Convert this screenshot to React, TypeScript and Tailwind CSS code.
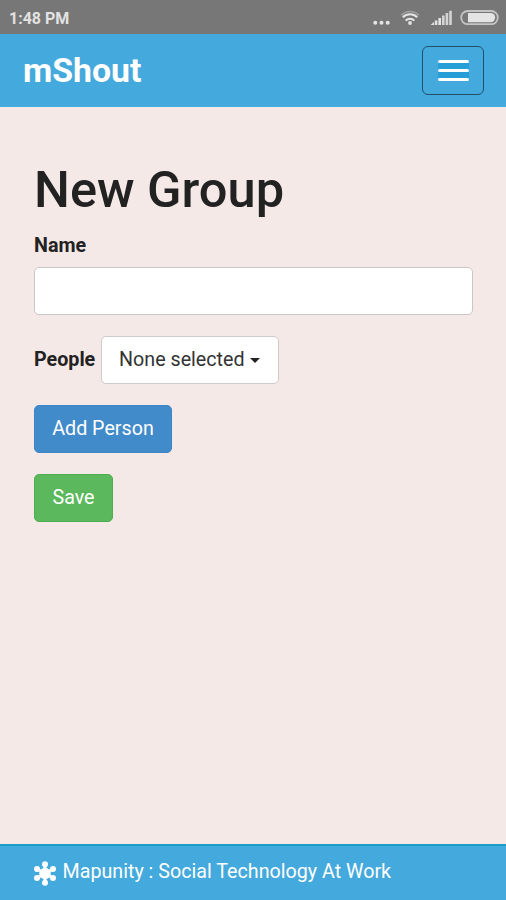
import React from "react";

function StatusIcons() {
  return (
    <svg width="134" height="34" viewBox="372 0 134 34" fill="#e4e4e4">
      <circle cx="375.3" cy="22.8" r="2" />
      <circle cx="381.5" cy="22.8" r="2" />
      <circle cx="387.7" cy="22.8" r="2" />
      <g fill="none" strokeWidth="2">
        <path d="M401.2 15.2a12.4 12.4 0 0 1 17.6 0" stroke="#a2a2a2" strokeWidth="1.4" />
        <path d="M402.8 17.3a10.2 10.2 0 0 1 14.4 0" stroke="#e6e6e6" />
        <path d="M405.6 20.6a6.2 6.2 0 0 1 8.8 0" stroke="#e6e6e6" />
      </g>
      <circle cx="410" cy="23" r="1.9" />
      <path d="M430.5 25l3.5-3v3z" />
      <rect x="434.8" y="20.5" width="2.6" height="4.5" />
      <rect x="438.4" y="18" width="2.6" height="7" />
      <rect x="442" y="15.5" width="2.6" height="9.5" fill="#d4d4d4" />
      <rect x="445.6" y="13" width="2.6" height="12" fill="#d4d4d4" />
      <rect x="449.2" y="10.8" width="2.6" height="14.2" fill="#d4d4d4" />
      <rect x="461.2" y="11" width="36.6" height="13.2" rx="6.6" fill="none" stroke="#c4c4c4" strokeWidth="1.8" />
      <path d="M468 12.9h22.5a4.7 4.7 0 0 1 0 9.4H468z" />
    </svg>
  );
}

function HubIcon() {
  return (
    <svg width="22" height="25" viewBox="0 0 22 25" fill="white" stroke="white">
      <path d="M11 3v19M3 8l16 9M19 8L3 17" strokeWidth="3" />
      <g stroke="none">
        <circle cx="11" cy="12.5" r="5.8" />
        <circle cx="11" cy="3.2" r="3" />
        <circle cx="11" cy="21.8" r="3" />
        <circle cx="3" cy="7.9" r="3" />
        <circle cx="19" cy="7.9" r="3" />
        <circle cx="3" cy="17.1" r="3" />
        <circle cx="19" cy="17.1" r="3" />
      </g>
    </svg>
  );
}

export default function App() {
  return (
    <div className="flex h-[900px] w-[506px] flex-col overflow-hidden bg-[#f5e9e8] font-['Roboto',sans-serif] text-[19.7px] leading-7 text-[#222]">
      <div className="flex h-[34px] shrink-0 items-center justify-between bg-[#777] pl-[9px]">
        <span className="pt-[3px] text-[16px] font-bold leading-5 text-[#e2e2e2]">1:48 PM</span>
        <StatusIcons />
      </div>
      <header className="flex h-[73px] shrink-0 items-center justify-between bg-[#44a9dc] pl-[23px] pr-[22px]">
        <span className="text-[33.8px] font-bold leading-10 text-white">mShout</span>
        <button aria-label="Menu" className="flex h-[49px] w-[62px] items-center justify-center rounded-md border border-[#20506b]">
          <span className="flex h-[21px] w-[31px] flex-col justify-between bg-[#279fd6]">
            <span className="h-[3px] rounded-sm bg-white" />
            <span className="h-[3px] rounded-sm bg-white" />
            <span className="h-[3px] rounded-sm bg-white" />
          </span>
        </button>
      </header>
      <main className="flex flex-1 flex-col items-start pl-[34px] pr-[33px] pt-[55px]">
        <h1 className="text-[50.6px] font-medium leading-[56px]">New Group</h1>
        <label htmlFor="name" className="mt-[14px] font-bold">Name</label>
        <input id="name" className="mt-[7px] h-[48px] w-full rounded-[5px] border border-[#c9c6c6] bg-white px-4 outline-none" />
        <div className="mt-[21px] flex items-center">
          <span className="w-[67px] font-bold">People</span>
          <button className="flex h-[48px] w-[178px] items-center rounded-[5px] border border-[#cccaca] bg-white pl-[17px] text-[#333]">
            <span>None selected</span>
            <span className="ml-[5px] border-x-[5.5px] border-t-[5.5px] border-x-transparent border-t-[#222]" />
          </button>
        </div>
        <button className="mt-[21px] h-[48px] w-[138px] rounded-[5px] border border-[#3c85c6] bg-[#428bca] text-white">Add Person</button>
        <button className="mt-[21px] h-[48px] w-[79px] rounded-[5px] border border-[#4cae4c] bg-[#5cb85c] text-white">Save</button>
      </main>
      <footer className="flex h-[56px] shrink-0 items-center gap-[6.5px] border-t-2 border-[#1b9ccb] bg-[#44a9dc] pl-[34px] text-white">
        <HubIcon />
        <span className="pb-0.5">Mapunity : Social Technology At Work</span>
      </footer>
    </div>
  );
}
